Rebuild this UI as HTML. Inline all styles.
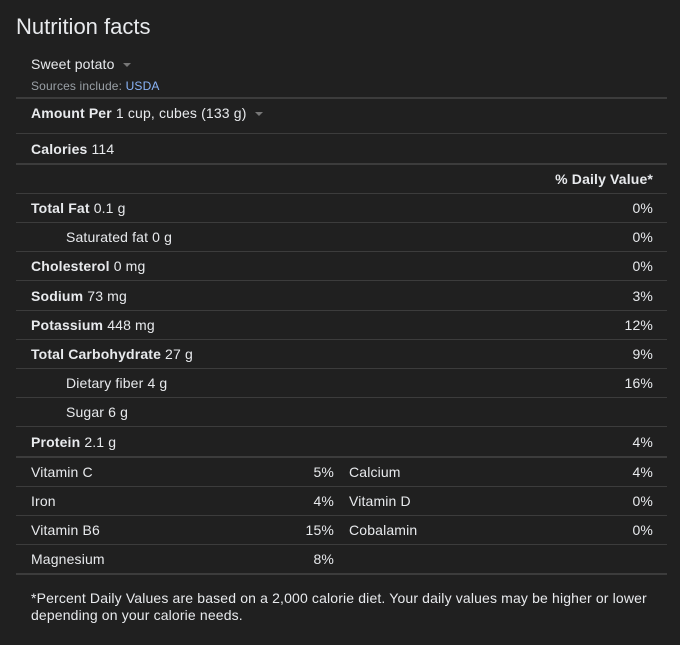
<!DOCTYPE html>
<html><head><meta charset="utf-8"><style>
html,body{margin:0;padding:0;width:680px;height:645px;background:#202020;overflow:hidden}
body{font-family:"Liberation Sans",Arial,sans-serif;color:#e8eaed;font-size:14px;position:relative;letter-spacing:0.15px}
.t{position:absolute;white-space:nowrap;line-height:16px}
.r{position:absolute;white-space:nowrap;line-height:16px;text-align:right}
.l{position:absolute;left:16px;width:651px;height:1px;background:#3c3c3c}
.L{position:absolute;left:16px;width:651px;height:2px;background:#3c3c3c}
b{font-weight:bold}
.tri{display:inline-block;width:0;height:0;border-left:4px solid transparent;border-right:4px solid transparent;border-top:4px solid #777;vertical-align:middle;margin-left:8px}
</style></head><body>
<div class="t" style="left:16px;top:14px;font-size:22px;line-height:26px;color:#e8eaed;letter-spacing:0">Nutrition facts</div>
<div class="t" style="left:31px;top:56px">Sweet potato<span class="tri"></span></div>
<div class="t" style="left:31px;top:78px;font-size:12px;color:#9aa0a6">Sources include: <span style="color:#8ab4f8">USDA</span></div>
<div class="L" style="top:97px"></div>
<div class="t" style="left:31px;top:105px"><b>Amount Per</b> 1 cup, cubes (133 g)<span class="tri"></span></div>
<div class="l" style="top:133px"></div>
<div class="t" style="left:31px;top:141px"><b>Calories</b> 114</div>
<div class="L" style="top:163px"></div>
<div class="r" style="right:27px;top:171px"><b>% Daily Value*</b></div>
<div class="l" style="top:193px"></div>
<div class="t" style="left:31px;top:200px"><b>Total Fat</b> 0.1 g</div><div class="r" style="right:27px;top:200px">0%</div>
<div class="l" style="top:222px"></div>
<div class="t" style="left:66px;top:229px">Saturated fat 0 g</div><div class="r" style="right:27px;top:229px">0%</div>
<div class="l" style="top:251px"></div>
<div class="t" style="left:31px;top:258px"><b>Cholesterol</b> 0 mg</div><div class="r" style="right:27px;top:258px">0%</div>
<div class="l" style="top:280px"></div>
<div class="t" style="left:31px;top:288px"><b>Sodium</b> 73 mg</div><div class="r" style="right:27px;top:288px">3%</div>
<div class="l" style="top:310px"></div>
<div class="t" style="left:31px;top:317px"><b>Potassium</b> 448 mg</div><div class="r" style="right:27px;top:317px">12%</div>
<div class="l" style="top:339px"></div>
<div class="t" style="left:31px;top:346px"><b>Total Carbohydrate</b> 27 g</div><div class="r" style="right:27px;top:346px">9%</div>
<div class="l" style="top:368px"></div>
<div class="t" style="left:66px;top:375px">Dietary fiber 4 g</div><div class="r" style="right:27px;top:375px">16%</div>
<div class="l" style="top:397px"></div>
<div class="t" style="left:66px;top:404px">Sugar 6 g</div>
<div class="l" style="top:426px"></div>
<div class="t" style="left:31px;top:434px"><b>Protein</b> 2.1 g</div><div class="r" style="right:27px;top:434px">4%</div>
<div class="L" style="top:456px"></div>
<div class="t" style="left:31px;top:464px">Vitamin C</div><div class="r" style="right:346px;top:464px">5%</div><div class="t" style="left:349px;top:464px">Calcium</div><div class="r" style="right:27px;top:464px">4%</div>
<div class="l" style="top:486px"></div>
<div class="t" style="left:31px;top:493px">Iron</div><div class="r" style="right:346px;top:493px">4%</div><div class="t" style="left:349px;top:493px">Vitamin D</div><div class="r" style="right:27px;top:493px">0%</div>
<div class="l" style="top:515px"></div>
<div class="t" style="left:31px;top:522px">Vitamin B6</div><div class="r" style="right:346px;top:522px">15%</div><div class="t" style="left:349px;top:522px">Cobalamin</div><div class="r" style="right:27px;top:522px">0%</div>
<div class="l" style="top:544px"></div>
<div class="t" style="left:31px;top:551px">Magnesium</div><div class="r" style="right:346px;top:551px">8%</div>
<div class="L" style="top:573px"></div>
<div class="t" style="left:31px;top:590px;line-height:17px">*Percent Daily Values are based on a 2,000 calorie diet. Your daily values may be higher or lower<br>depending on your calorie needs.</div>
</body></html>
